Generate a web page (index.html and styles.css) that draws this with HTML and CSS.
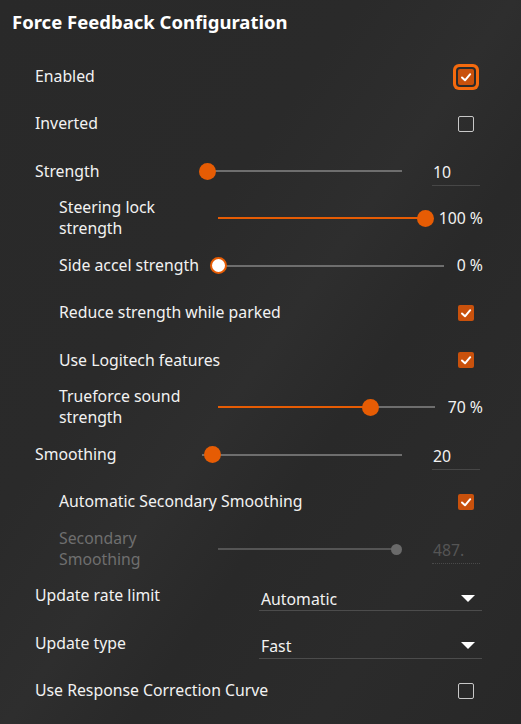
FILE: index.html
```html
<!DOCTYPE html>
<html>
<head>
<meta charset="utf-8">
<link rel="stylesheet" href="styles.css">
</head>
<body>
<div class="panel">
  <h1 class="title">Force Feedback Configuration</h1>

  <div class="row top check-row">
    <span class="label">Enabled</span>
    <span class="checkbox checked focus"><svg viewBox="0 0 16 16"><path d="M4 8.5 L7 11.3 L12.2 5.2"/></svg></span>
  </div>
  <div class="row top check-row">
    <span class="label">Inverted</span>
    <span class="checkbox"></span>
  </div>

  <div class="row top slider-row">
    <span class="label">Strength</span>
    <div class="slider"><div class="inner" style="--p:2.5%"><div class="track"></div><div class="thumb"></div></div></div>
    <span class="valuebox">10</span>
  </div>

  <div class="row sub slider-row">
    <span class="label wrap">Steering lock strength</span>
    <div class="slider"><div class="inner" style="--p:100%"><div class="track"></div><div class="fill"></div><div class="thumb"></div></div></div>
    <span class="value">100 %</span>
  </div>

  <div class="row sub slider-row">
    <span class="label">Side accel strength</span>
    <div class="slider"><div class="inner" style="--p:0%"><div class="track"></div><div class="thumb hollow"></div></div></div>
    <span class="value">0 %</span>
  </div>

  <div class="row sub check-row">
    <span class="label">Reduce strength while parked</span>
    <span class="checkbox checked"><svg viewBox="0 0 16 16"><path d="M4 8.5 L7 11.3 L12.2 5.2"/></svg></span>
  </div>

  <div class="row sub check-row">
    <span class="label">Use Logitech features</span>
    <span class="checkbox checked"><svg viewBox="0 0 16 16"><path d="M4 8.5 L7 11.3 L12.2 5.2"/></svg></span>
  </div>

  <div class="row sub slider-row">
    <span class="label wrap">Trueforce sound strength</span>
    <div class="slider"><div class="inner" style="--p:70.4%"><div class="track"></div><div class="fill"></div><div class="thumb"></div></div></div>
    <span class="value">70 %</span>
  </div>

  <div class="row top slider-row">
    <span class="label">Smoothing</span>
    <div class="slider"><div class="inner" style="--p:5%"><div class="track"></div><div class="thumb"></div></div></div>
    <span class="valuebox">20</span>
  </div>

  <div class="row sub check-row">
    <span class="label">Automatic Secondary Smoothing</span>
    <span class="checkbox checked"><svg viewBox="0 0 16 16"><path d="M4 8.5 L7 11.3 L12.2 5.2"/></svg></span>
  </div>

  <div class="row sub slider-row disabled">
    <span class="label wrap">Secondary Smoothing</span>
    <div class="slider"><div class="inner" style="--p:100%"><div class="track"></div><div class="thumb small"></div></div></div>
    <span class="valuebox dotted">487.</span>
  </div>

  <div class="row top select-row">
    <span class="label">Update rate limit</span>
    <div class="select"><span>Automatic</span><span class="arrow"></span></div>
  </div>

  <div class="row top select-row">
    <span class="label">Update type</span>
    <div class="select"><span>Fast</span><span class="arrow"></span></div>
  </div>

  <div class="row top check-row">
    <span class="label">Use Response Correction Curve</span>
    <span class="checkbox"></span>
  </div>
</div>
</body>
</html>
```
FILE: styles.css
```css
html, body {
  margin: 0;
  padding: 0;
}
body {
  width: 521px;
  height: 724px;
  overflow: hidden;
  background: linear-gradient(125deg, #292929 0%, #2a2a2a 35%, #2e2e2e 50%, #292929 62%, #2b2b2b 80%, #282828 100%);
  font-family: "Noto Sans", "Open Sans", sans-serif;
  color: #f2f2f2;
}
.panel {
  display: flex;
  flex-direction: column;
}
.title {
  margin: 0;
  height: 53px;
  box-sizing: border-box;
  padding: 10px 0 0 12px;
  font-size: 18.5px;
  line-height: 24px;
  font-weight: 700;
  color: #ffffff;
}
.row {
  display: flex;
  align-items: center;
  height: 47.25px;
  font-size: 15.8px;
  line-height: 21px;
}
.row.top { padding-left: 35px; }
.row.sub { padding-left: 59px; }

.check-row {
  justify-content: space-between;
  padding-right: 47px;
}
.checkbox {
  width: 16px;
  height: 16px;
  box-sizing: border-box;
  border: 1.5px solid #c8c8c8;
  border-radius: 2px;
  display: flex;
  align-items: center;
  justify-content: center;
}
.checkbox.checked {
  background: #c9510c;
  border: none;
}
.checkbox svg {
  width: 16px;
  height: 16px;
}
.checkbox svg path {
  fill: none;
  stroke: #ffffff;
  stroke-width: 2;
  stroke-linecap: round;
  stroke-linejoin: round;
}
.checkbox.focus {
  box-shadow: 0 0 0 2px #2a2a2a, 0 0 0 5px #f46a0e;
  border-radius: 2px;
}

.slider-row .label { flex: 0 0 auto; box-sizing: border-box; }
.row.top.slider-row .label { width: 159px; }
.row.sub.slider-row .label { width: 151px; }
.label.wrap { padding-right: 18px; }

.slider {
  height: 18px;
  display: flex;
  align-items: center;
  padding: 0 8px;
  box-sizing: border-box;
}
.row.top .slider { width: 216px; }
.row.sub .slider { flex: 1 1 auto; }
.row.sub.disabled .slider { flex: 0 0 194px; }
.inner {
  position: relative;
  flex: 1;
  height: 18px;
}
.track {
  position: absolute;
  left: 0;
  right: 0;
  top: 8px;
  height: 2px;
  background: #6e6e6e;
}
.fill {
  position: absolute;
  left: 0;
  top: 8px;
  height: 2px;
  width: var(--p);
  background: #e65c04;
}
.thumb {
  position: absolute;
  top: 0.5px;
  left: var(--p);
  width: 17px;
  height: 17px;
  margin-left: -8.5px;
  border-radius: 50%;
  background: #e65c04;
}
.thumb.hollow {
  background: #ffffff;
  box-sizing: border-box;
  border: 2px solid #e65c04;
}
.thumb.small {
  width: 11px;
  height: 11px;
  top: 3.5px;
  margin-left: -5.5px;
  background: #6a6a6a;
}

.value {
  margin-left: 5px;
  padding-right: 38px;
  white-space: nowrap;
}
.valuebox {
  margin-left: 22px;
  width: 48px;
  height: 28px;
  box-sizing: border-box;
  padding: 4px 0 0 1px;
  line-height: 20px;
  border-bottom: 1px solid #474747;
  margin-top: 2px;
}
.row.top .valuebox { margin-right: 41px; }
.row.sub .valuebox { margin-left: 28px; margin-right: 41px; }

.disabled { color: #6f6f6f; }
.disabled .track { background: #555555; }
.valuebox.dotted {
  border-bottom: 1px dotted #4a4a4a;
  color: #555555;
}

.select-row .label {
  flex: 0 0 224px;
  margin-top: -1px;
}
.select {
  width: 223px;
  height: 28px;
  box-sizing: border-box;
  padding: 4px 7px 0 2px;
  margin-top: 2px;
  line-height: 20px;
  border-bottom: 1px solid #4c4c4c;
  display: flex;
  justify-content: space-between;
  align-items: center;
}
.arrow {
  width: 0;
  height: 0;
  border-left: 7px solid transparent;
  border-right: 7px solid transparent;
  border-top: 7px solid #ffffff;
  margin-top: -1px;
}
```
